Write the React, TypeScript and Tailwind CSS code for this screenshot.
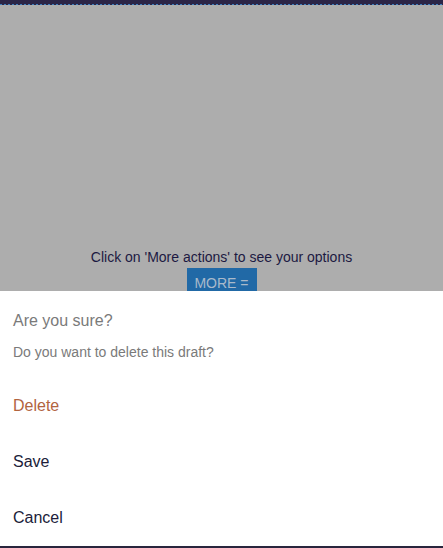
import React from "react";

const actions = [
  { label: "Delete", tone: "text-[#b2643f]" },
  { label: "Save", tone: "text-[#201d3a]" },
  { label: "Cancel", tone: "text-[#201d3a]" },
];

export default function App() {
  return (
    <div className="flex h-[548px] w-[443px] flex-col overflow-hidden bg-white font-['Liberation_Sans',Arial,sans-serif]">
      {/* Top bar behind the overlay */}
      <div className="h-[4px] bg-[#2b2547]" />
      <div className="h-[1px] bg-[repeating-linear-gradient(90deg,#3d7fbf_0_2px,#2b2547_2px_4px)]" />

      {/* Dimmed page */}
      <div className="flex h-[286px] flex-col items-center justify-end overflow-hidden bg-[#adadad]">
        <p className="text-[14px] leading-[20px] text-[#1c1942]">
          Click on 'More actions' to see your options
        </p>
        <button className="mt-[1px] mb-[-6px] h-[29px] w-[70px] bg-[#2169a6] text-[14px] leading-[20px] text-[#a9bacb]">
          MORE =
        </button>
      </div>

      {/* Action sheet */}
      <div className="flex flex-1 flex-col bg-white">
        <div className="px-[13px] pt-[18px]">
          <h2 className="text-[16px] leading-[24px] text-[#7a7a7a]">Are you sure?</h2>
          <p className="mt-[9px] text-[14px] leading-[20px] text-[#7a7a7a]">
            Do you want to delete this draft?
          </p>
        </div>
        <ul className="mt-[16px] flex flex-col">
          {actions.map((a) => (
            <li key={a.label} className={`flex h-[56px] items-center px-[13px] text-[16px] leading-[24px] ${a.tone}`}>
              {a.label}
            </li>
          ))}
        </ul>
      </div>
      <div className="h-[2px] bg-[#29253d]" />
    </div>
  );
}
